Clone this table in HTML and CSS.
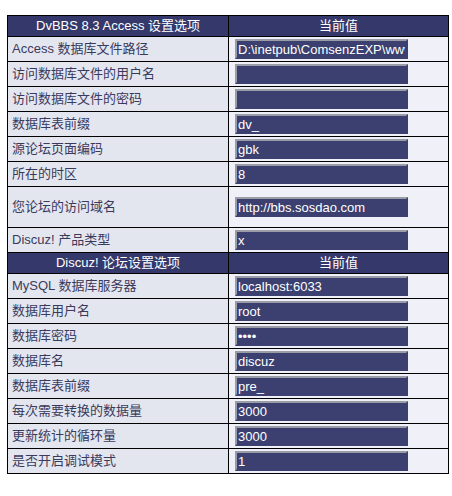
FILE: index.html
```html
<!DOCTYPE html>
<html lang="zh-CN">
<head>
<meta charset="utf-8">
<title>DvBBS 转换设置</title>
<link rel="stylesheet" href="styles.css">
</head>
<body>
<table class="cfg">
  <colgroup><col class="c1"><col class="c2"></colgroup>
  <tr class="head"><th>DvBBS 8.3 Access 设置选项</th><th>当前值</th></tr>
  <tr><td class="lbl">Access 数据库文件路径</td><td class="val"><input class="box" type="text" value="D:\inetpub\ComsenzEXP\wwwroot"></td></tr>
  <tr><td class="lbl">访问数据库文件的用户名</td><td class="val"><input class="box" type="text" value=""></td></tr>
  <tr><td class="lbl">访问数据库文件的密码</td><td class="val"><input class="box" type="text" value=""></td></tr>
  <tr><td class="lbl">数据库表前缀</td><td class="val"><input class="box" type="text" value="dv_"></td></tr>
  <tr><td class="lbl">源论坛页面编码</td><td class="val"><input class="box" type="text" value="gbk"></td></tr>
  <tr><td class="lbl">所在的时区</td><td class="val"><input class="box" type="text" value="8"></td></tr>
  <tr class="tall"><td class="lbl">您论坛的访问域名</td><td class="val"><input class="box" type="text" value="http://bbs.sosdao.com"></td></tr>
  <tr><td class="lbl">Discuz! 产品类型</td><td class="val"><input class="box" type="text" value="x"></td></tr>
  <tr class="head"><th>Discuz! 论坛设置选项</th><th>当前值</th></tr>
  <tr><td class="lbl">MySQL 数据库服务器</td><td class="val"><input class="box" type="text" value="localhost:6033"></td></tr>
  <tr><td class="lbl">数据库用户名</td><td class="val"><input class="box" type="text" value="root"></td></tr>
  <tr><td class="lbl">数据库密码</td><td class="val"><input class="box" type="password" value="root"></td></tr>
  <tr><td class="lbl">数据库名</td><td class="val"><input class="box" type="text" value="discuz"></td></tr>
  <tr><td class="lbl">数据库表前缀</td><td class="val"><input class="box" type="text" value="pre_"></td></tr>
  <tr><td class="lbl">每次需要转换的数据量</td><td class="val"><input class="box" type="text" value="3000"></td></tr>
  <tr><td class="lbl">更新统计的循环量</td><td class="val"><input class="box" type="text" value="3000"></td></tr>
  <tr><td class="lbl">是否开启调试模式</td><td class="val"><input class="box" type="text" value="1"></td></tr>
</table>
</body>
</html>
```
FILE: styles.css
```css
html, body {
  background: #ffffff;
}
body {
  margin: 15px 0 0 7px;
  font-family: "Liberation Sans", "Noto Sans CJK SC", sans-serif;
  font-size: 13px;
  color: #3a3a5c;
}
.cfg {
  border-collapse: collapse;
  border: 1px solid #000;
  table-layout: fixed;
  width: 442px;
}
.c1 { width: 221px; }
.c2 { width: 220px; }
.cfg th, .cfg td {
  border: 1px solid #000;
  padding: 0;
}
.cfg .head th {
  height: 20px;
  background: #34386a;
  color: #ffffff;
  font-weight: normal;
  text-align: center;
  line-height: 20px;
}
.cfg td {
  height: 24px;
}
.cfg .tall td {
  height: 40px;
}
.cfg .lbl {
  background: #e4e6ef;
  padding-left: 4px;
  line-height: 16px;
  white-space: nowrap;
}
.cfg .val {
  background: #eff0f8;
  padding-left: 6px;
}
.box {
  display: block;
  box-sizing: border-box;
  width: 173px;
  height: 20px;
  margin: 0;
  padding: 0 1px;
  background: #3b4070;
  color: #ffffff;
  font-family: "Liberation Sans", "Noto Sans CJK SC", sans-serif;
  font-size: 13px;
  border-style: solid;
  border-width: 2px;
  border-color: #9a9ca6 #3b4070 #3b4070 #9a9ca6;
  outline: none;
}
```
